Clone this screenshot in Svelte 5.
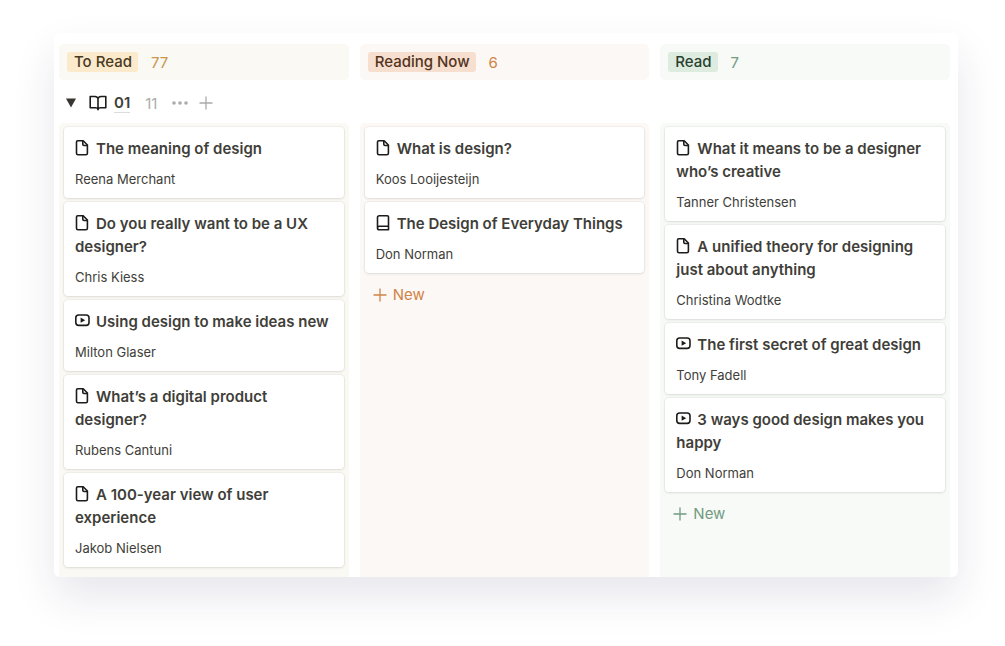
<script lang="ts">
    type Kind = 'article' | 'video' | 'book';
    interface Item { title: string; author: string; kind: Kind }
    interface Column { name: string; tone: string; count: number; items: Item[]; showNew: boolean }

    const columns: Column[] = [
        {
            name: 'To Read', tone: 'yellow', count: 77, showNew: false,
            items: [
                { title: 'The meaning of design', author: 'Reena Merchant', kind: 'article' },
                { title: 'Do you really want to be a UX designer?', author: 'Chris Kiess', kind: 'article' },
                { title: 'Using design to make ideas new', author: 'Milton Glaser', kind: 'video' },
                { title: 'What’s a digital product designer?', author: 'Rubens Cantuni', kind: 'article' },
                { title: 'A 100-year view of user experience', author: 'Jakob Nielsen', kind: 'article' },
            ],
        },
        {
            name: 'Reading Now', tone: 'orange', count: 6, showNew: true,
            items: [
                { title: 'What is design?', author: 'Koos Looijesteijn', kind: 'article' },
                { title: 'The Design of Everyday Things', author: 'Don Norman', kind: 'book' },
            ],
        },
        {
            name: 'Read', tone: 'green', count: 7, showNew: true,
            items: [
                { title: 'What it means to be a designer who’s creative', author: 'Tanner Christensen', kind: 'article' },
                { title: 'A unified theory for designing just about anything', author: 'Christina Wodtke', kind: 'article' },
                { title: 'The first secret of great design', author: 'Tony Fadell', kind: 'video' },
                { title: '3 ways good design makes you happy', author: 'Don Norman', kind: 'video' },
            ],
        },
    ];

    let open = $state(true);
</script>

{#snippet plus()}
    <svg class="plus" viewBox="0 0 14 14" aria-hidden="true"><path d="M7 .5v13M.5 7h13" /></svg>
{/snippet}

{#snippet icon(kind: Kind)}
    <svg class="icon" viewBox="0 0 16 16" aria-hidden="true">
        {#if kind === 'article'}
            <path d="M2.7.8h5.5l4.2 4.2v8.3a1.5 1.5 0 0 1-1.5 1.5H3A1.5 1.5 0 0 1 1.5 13.3V2A1.2 1.2 0 0 1 2.7.8z" />
            <path d="M7.8 1v3.300c0 .8.4 1.200 1.200 1.200h3.300" />
        {:else if kind === 'video'}
            <rect x=".8" y="2" width="13.2" height="10.4" rx="2.8" />
            <path class="solid" d="M5.6 4.600v5.200l4.600-2.600z" />
        {:else}
            <path d="M12.500 11.300V2A1.200 1.200 0 0 0 11.300.8H3.200A1.700 1.700 0 0 0 1.500 2.500V13a1.800 1.800 0 0 0 1.800 1.800h9.200v-3.500H3.300A1.800 1.800 0 0 0 1.500 13" />
        {/if}
    </svg>
{/snippet}

<main class="board">
    <div class="row">
        {#each columns as col (col.name)}
            <header class="head {col.tone}">
                <h2 class="tag">{col.name}</h2>
                <span class="count">{col.count}</span>
            </header>
        {/each}
    </div>

    <div class="group">
        <button class="toggle" aria-label="Toggle group" aria-expanded={open} onclick={() => (open = !open)}>
            <svg class="caret" class:closed={!open} viewBox="0 0 10 10" aria-hidden="true"><path d="M0 .5h10l-5 9z" /></svg>
        </button>
        <svg class="open-book" viewBox="0 0 18 16" aria-hidden="true">
            <path d="M9 3.6C8.6 2.2 7.6 1.500 6 1.500H1.200v11.300h5.600c1.300 0 2 .6 2.200 1.900.2-1.300.9-1.900 2.200-1.900h5.600V1.500H12c-1.600 0-2.600.7-3 2.100zM9 3.600v11.100" />
        </svg>
        <h3>01</h3>
        <span class="total">11</span>
        <button aria-label="Group options">
            <svg class="dots" viewBox="0 0 16 4" aria-hidden="true">
                <circle cx="2" cy="2" r="1.8" /><circle cx="8" cy="2" r="1.8" /><circle cx="14" cy="2" r="1.8" />
            </svg>
        </button>
        <button aria-label="Add item to group">{@render plus()}</button>
    </div>

    {#if open}
        <div class="row">
            {#each columns as col (col.name)}
                <section class="column {col.tone}" aria-label={col.name}>
                    {#each col.items as item (item.title)}
                        <article class="card">
                            <h4>{@render icon(item.kind)}{item.title}</h4>
                            <p>{item.author}</p>
                        </article>
                    {/each}
                    {#if col.showNew}
                        <button class="new">{@render plus()}New</button>
                    {/if}
                </section>
            {/each}
        </div>
    {/if}
</main>

<style>
    :global(body) { background: #fff; }
    .board {
        margin: 33px 47px 69px 54px;
        padding: 11px 8px 0 5px;
        overflow: hidden;
        border-radius: 6px;
        background: #fff;
        box-shadow: 0 20px 44px rgba(40, 30, 80, 0.11);
        color: #403e39;
        font-family: Inter, "Liberation Sans", sans-serif;
        font-size: 15px;
    }
    h2, h3, h4, p { margin: 0; font-size: inherit; }
    button { display: flex; align-items: center; padding: 0; border: 0; background: none; color: inherit; font: inherit; cursor: pointer; }
    svg { flex: none; }

    .row { display: grid; grid-template-columns: repeat(3, 1fr); gap: 11px; }
    .yellow { --tint: #faf9f3; --tag: #fbeacb; --tag-text: #4a3a22; --accent: #c8964c; }
    .orange { --tint: #fcf8f5; --tag: #f6dfcf; --tag-text: #54331c; --accent: #cf8347; }
    .green { --tint: #f7faf7; --tag: #deebdf; --tag-text: #27402f; --accent: #739b80; }

    .head { display: flex; align-items: center; gap: 13px; height: 36px; padding: 0 8px; border-radius: 5px; background: var(--tint); }
    .tag { padding: 0 6px 0 7px; border-radius: 3px; background: var(--tag); color: var(--tag-text); font-weight: 500; line-height: 20px; }
    .count { color: var(--accent); }

    .group { display: flex; align-items: center; height: 43px; padding: 3px 7px 0; box-sizing: border-box; color: #acaba8; }
    .caret { width: 10px; height: 10px; fill: #37352f; }
    .caret.closed { transform: rotate(-90deg); }
    .open-book { width: 18px; height: 16px; margin: 0 7px 0 13px; fill: none; stroke: #1d1c1a; stroke-width: 1.6; stroke-linejoin: round; }
    h3 { border-bottom: 1px solid #dddcda; font-weight: 600; color: #403e39; line-height: 18px; }
    .total { margin: 0 15px; }
    .dots { width: 16px; height: 4px; margin-right: 11px; fill: currentColor; }
    .plus { width: 14px; height: 14px; fill: none; stroke: currentColor; stroke-width: 1.3; }

    .column { display: flex; flex-direction: column; gap: 4px; padding: 4px 5px 10px; border-radius: 5px 5px 0 0; background: var(--tint); }
    .card { padding: 10px 11px 9px; border-radius: 4px; background: #fff; box-shadow: 0 0 0 1px rgba(15, 15, 15, 0.04), 0 1px 3px rgba(15, 15, 15, 0.09); }
    h4 { font-weight: 600; line-height: 23px; }
    .icon { width: 16px; height: 16px; margin-right: 5px; vertical-align: -2px; fill: none; stroke: #1d1c1a; stroke-width: 1.6; stroke-linejoin: round; }
    .icon .solid { fill: #1d1c1a; stroke: none; }
    .card p { margin-top: 9px; font-size: 13px; line-height: 20px; }
    .new { gap: 6px; padding: 8px; color: var(--accent); line-height: 20px; }
</style>
